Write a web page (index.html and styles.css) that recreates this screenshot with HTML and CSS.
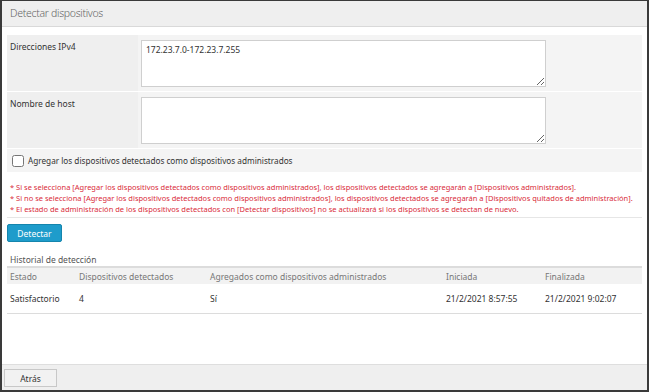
FILE: index.html
```html
<!DOCTYPE html>
<html lang="es">
<head>
<meta charset="utf-8">
<title>Detectar dispositivos</title>
<link rel="stylesheet" href="styles.css">
</head>
<body>
<div class="window">
  <div class="titlebar">Detectar dispositivos</div>
  <div class="content">
    <div class="form">
      <div class="label">Direcciones IPv4</div>
      <div class="value"><textarea class="ta">172.23.7.0-172.23.7.255</textarea></div>
      <div class="label">Nombre de host</div>
      <div class="value"><textarea class="ta"></textarea></div>
      <div class="check-row">
        <label class="check"><input type="checkbox"><span>Agregar los dispositivos detectados como dispositivos administrados</span></label>
      </div>
    </div>
    <div class="notes">
      <p>* Si se selecciona [Agregar los dispositivos detectados como dispositivos administrados], los dispositivos detectados se agregarán a [Dispositivos administrados].</p>
      <p>* Si no se selecciona [Agregar los dispositivos detectados como dispositivos administrados], los dispositivos detectados se agregarán a [Dispositivos quitados de administración].</p>
      <p>* El estado de administración de los dispositivos detectados con [Detectar dispositivos] no se actualizará si los dispositivos se detectan de nuevo.</p>
    </div>
    <div class="actions"><button class="btn-primary">Detectar</button></div>
    <div class="history-title">Historial de detección</div>
    <table class="history">
      <thead>
        <tr><th class="c1">Estado</th><th class="c2">Dispositivos detectados</th><th class="c3">Agregados como dispositivos administrados</th><th class="c4">Iniciada</th><th class="c5">Finalizada</th></tr>
      </thead>
      <tbody>
        <tr><td>Satisfactorio</td><td>4</td><td>Sí</td><td>21/2/2021 8:57:55</td><td>21/2/2021 9:02:07</td></tr>
      </tbody>
    </table>
  </div>
  <div class="footer"><button class="btn">Atrás</button></div>
</div>
</body>
</html>
```
FILE: styles.css
```css
* { box-sizing: border-box; }
html, body { margin: 0; padding: 0; background: #fff; }
body { font-family: "Noto Sans", "Open Sans", sans-serif; color: #333; }
.window {
  width: 649px; height: 392px;
  border: 2px solid #3a3a3a; border-top-width: 1px;
  display: flex; flex-direction: column; background: #fff;
}
.titlebar {
  height: 26px; flex: none;
  background: #efefef; border-bottom: 1px solid #d9d9d9;
  padding: 5px 0 0 8px;
  font-size: 10.5px; letter-spacing: -0.3px; color: #666; font-weight: 300;
}
.content { flex: 1; padding: 8px 5px 0 5px; }
.form {
  display: grid; grid-template-columns: 131px 1fr;
  row-gap: 1px; background: #fff;
}
.label {
  background: #efefef; padding: 6px 3px;
  font-size: 8.5px; color: #333;
}
.value { background: #f4f4f4; padding: 5px 96px 4px 3px; }
.ta {
  display: block; width: 405px; height: 47px;
  border: 1px solid #cfcfcf; background: #fff; resize: vertical;
  font-family: inherit; font-size: 8.5px; color: #333; padding: 3px 4px;
}
.check-row { grid-column: 1 / 3; background: #f4f4f4; height: 23px; display: flex; align-items: center; padding-left: 5px; }
.check { display: flex; align-items: center; gap: 4px; font-size: 8.2px; color: #333; }
.check input { width: 12px; height: 12px; margin: 0; }
.notes { padding: 10px 3px 2px; border-bottom: 1px solid #e6e6e6; }
.notes p { margin: 0; font-size: 7.5px; line-height: 11px; color: #d92b3a; }
.actions { padding: 6px 0 0; display: flex; }
.btn-primary {
  display: block; width: 55px; height: 18px; border: 1px solid #1585ad; border-radius: 2px;
  background: #1e9ccb; color: #fff; font-family: inherit; font-size: 8.5px; padding: 0;
}
.history-title { margin-top: 11px; font-size: 8.5px; line-height: 13px; color: #555; padding-left: 3px; }
.history { width: 100%; border-collapse: collapse; border-top: 2px solid #dcdcdc; font-size: 8.5px; }
.history th { background: #f2f2f2; color: #777; font-weight: normal; text-align: left; height: 17px; padding: 0 3px; }
.history td { height: 29px; padding: 0 3px; color: #333; border-bottom: 1px solid #dcdcdc; }
.history .c1 { width: 69px; }
.history .c2 { width: 131px; }
.history .c3 { width: 236px; }
.history .c4 { width: 99px; }
.footer {
  flex: none; height: 26px; background: #efefef; border-top: 1px solid #dedede;
  padding: 4px 0 0 2px; display: flex; align-items: flex-start;
}
.btn {
  display: block; width: 53px; height: 18px; border: 1px solid #c8c8c8; background: #f2f2f2;
  font-family: inherit; font-size: 8.5px; color: #333; padding: 0;
}
```
